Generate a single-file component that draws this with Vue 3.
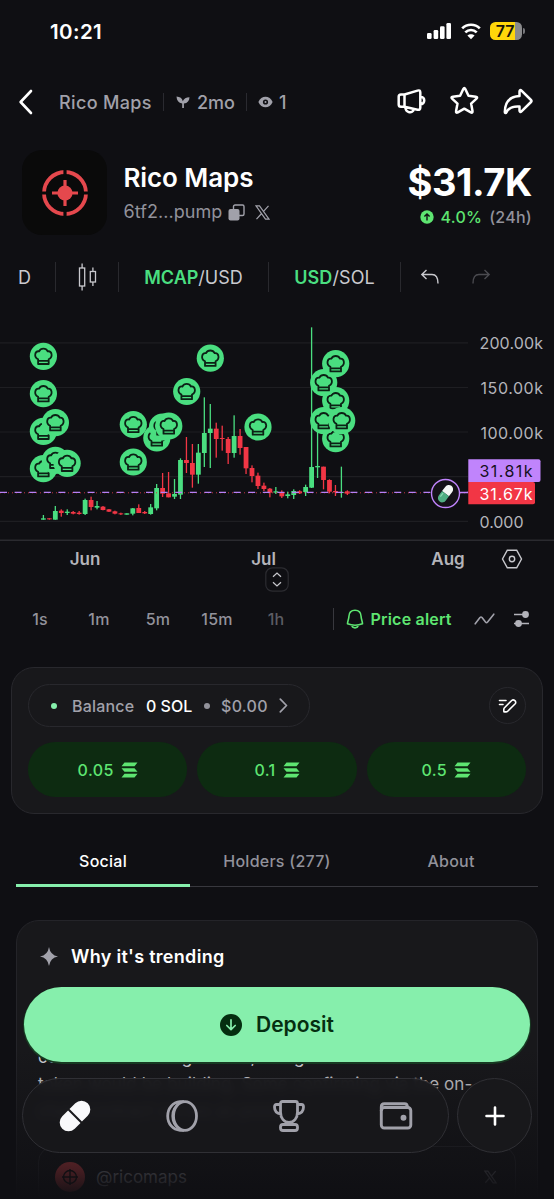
<template>
  <div class="app">
    <div class="status-bar">
      <span class="clock">10:21</span>
      <div class="status-icons">
        <svg width="26" height="18" viewBox="0 0 26 18" fill="#fff">
          <rect x="0" y="11" width="4.6" height="6" rx="1.3" />
          <rect x="6.6" y="8" width="4.6" height="9" rx="1.3" />
          <rect x="13" y="4.3" width="4.6" height="12.7" rx="1.3" />
          <rect x="19.4" y="1" width="4.6" height="16" rx="1.3" />
        </svg>
        <svg class="wifi" width="20" height="17" viewBox="0 0 20 17">
          <path d="M1.2 5.4C6 .5 14 .5 18.8 5.4M4.3 9.400c3.2-3.2 8.200-3.200 11.400 0" fill="none" stroke="#fff" stroke-width="2.700" />
          <path d="M10 16.200l-3.600-3.600c2-1.900 5.200-1.900 7.200 0z" fill="#fff" />
        </svg>
        <div class="battery"><span>77</span></div>
        <i class="battery-tip"></i>
      </div>
    </div>

    <header class="header">
      <svg class="back" width="16" height="28" viewBox="0 0 16 28" fill="none" stroke="#fff" stroke-width="2.600" stroke-linecap="round" stroke-linejoin="round">
        <path d="M13 3 2.600 14 13 25" />
      </svg>
      <span class="crumb crumb-name">Rico Maps</span>
      <i class="sep"></i>
      <span class="crumb crumb-age">
        <svg width="14" height="14" viewBox="0 0 14 14" fill="#a1a1aa">
          <path d="M.5 1.500c3.600.1 5.700 2 6.300 4.700C8 3.700 10 2.300 13.500 2.200c-.1 3.700-2 5.800-5.600 6.300V13H6.200V8.500C2.500 7.900.7 5.600.5 1.500z" />
        </svg>
        2mo
      </span>
      <i class="sep"></i>
      <span class="crumb crumb-views">
        <svg width="15" height="12" viewBox="0 0 15 12">
          <path d="M.4 6C3-1 12-1 14.600 6 12 13 3 13 .4 6z" fill="#a1a1aa" />
          <circle cx="7.500" cy="6" r="2.600" fill="#0f0f13" />
          <circle cx="7.500" cy="6" r="1" fill="#a1a1aa" />
        </svg>
        1
      </span>
      <div class="header-actions">
        <svg width="30" height="30" viewBox="0 0 30 30" fill="none" stroke="#fff" stroke-width="2.500" stroke-linejoin="round" stroke-linecap="round">
          <path d="M8.500 8.500 21.500 4.600Q24.300 3.700 24.300 6.500V21.500Q24.300 24.300 21.500 23.700L8.500 20.800zM8.500 8.500H5Q2.700 8.500 2.700 10.800V18.500Q2.700 20.800 5 20.800H8.500M24.500 10.800c5 0 5 7.400 0 7.400M9.300 21c.2 6 7.500 7 8.500 2.300" />
        </svg>
        <svg width="30" height="30" viewBox="0 0 30 30" fill="none" stroke="#fff" stroke-width="2.500" stroke-linejoin="round">
          <path d="M14.300 3c.7-1.300 1.300-1.300 2 0l3.200 6.800 7.300.9c1.500.2 1.700 1 .7 1.900l-5.400 5 1.400 7.500c.3 1.500-.4 2-1.700 1.300L15.300 22.700l-6.500 3.700c-1.300.7-2 .2-1.700-1.300l1.400-7.500-5.400-5c-1-.9-.8-1.700.7-1.900l7.300-.9z" />
        </svg>
        <svg width="32" height="30" viewBox="0 0 32 30" fill="none" stroke="#fff" stroke-width="2.500" stroke-linejoin="round">
          <path d="M17.500 10V5.500c0-1.500 1-1.900 2-.9l9.500 9.400c.7.700.7 1.300 0 2l-9.500 9.400c-1 1-2 .6-2-.9V20.500C10 20 6.500 22 4.500 26.200c-.6 1.300-1.700 1-1.700-.3C3 16 8 10.500 17.500 10z" />
        </svg>
      </div>
    </header>

    <section class="token">
      <div class="token-logo">
        <svg width="46" height="48" viewBox="-23 -24 46 48">
          <circle r="21" fill="none" stroke="#e5484d" stroke-width="3.800" />
          <path d="M0-24V24M-23 0H23" stroke="#0a0a0a" stroke-width="3.200" />
          <path d="M0-13V13M-13 0H13" stroke="#e5484d" stroke-width="3.200" />
          <circle r="7.600" fill="#e5484d" />
        </svg>
      </div>
      <div class="token-info">
        <h1>Rico Maps</h1>
        <div class="address">
          <span>6tf2...pump</span>
          <svg width="17" height="17" viewBox="0 0 17 17">
            <rect x="5.500" y="1" width="10.500" height="10.500" rx="1.500" fill="none" stroke="#a1a1aa" stroke-width="1.400" />
            <rect x=".5" y="5" width="11" height="11.500" rx="2" fill="#a1a1aa" />
          </svg>
          <svg class="x-logo" width="15" height="15" viewBox="0 0 15 15" fill="none" stroke="#a1a1aa" stroke-width="1.200">
            <path d="M1 .8H4.500L14 14.200H10.500zM13.500.8 8.300 6.700M6.600 8.500 1.500 14.200" />
          </svg>
        </div>
      </div>
      <div class="token-price">
        <div class="price">$31.7K</div>
        <div class="change">
          <svg width="14" height="14" viewBox="0 0 14 14">
            <circle cx="7" cy="7" r="6.700" fill="#5ee571" />
            <path d="M7 10.500V4M4.400 6.500 7 3.900l2.600 2.600" fill="none" stroke="#0f0f13" stroke-width="1.400" />
          </svg>
          <span class="up">4.0%</span>
          <span>(24h)</span>
        </div>
      </div>
    </section>

    <nav class="toolbar">
      <span class="tool tool-day">D</span>
      <span class="tool tool-candle">
        <svg width="19" height="28" viewBox="0 0 19 28" fill="none" stroke="#c9c9ce" stroke-width="1.300">
          <rect x="1.500" y="5" width="5.200" height="18" />
          <rect x="12.300" y="8.500" width="5.200" height="10.500" />
          <path d="M4.100 .5V5M4.100 23V27.500M14.900 4.500V8.500M14.900 19V23" />
        </svg>
      </span>
      <span class="tool tool-mcap"><b>MCAP</b>/USD</span>
      <span class="tool tool-usd"><b>USD</b>/SOL</span>
      <span class="tool tool-history">
        <svg width="20" height="16" viewBox="0 0 20 16" fill="none" stroke="#c9c9ce" stroke-width="1.400">
          <path d="M6.500 1 1.800 5.500 6.500 10M2 5.500H12C16 5.500 18 8 18 14.500" />
        </svg>
        <svg width="20" height="16" viewBox="0 0 20 16" fill="none" stroke="#4b4b50" stroke-width="1.400">
          <path d="M13.500 1 18.200 5.500 13.500 10M18 5.500H8C4 5.500 2 8 2 14.500" />
        </svg>
      </span>
    </nav>

    <svg class="chart" width="554" height="241" viewBox="0 300 554 241">
      <path d="M0 342.800H468M0 387.500H468M0 432H468M0 476.700H468M0 521.300H468" stroke="#1e1e22" stroke-width="1.200" />
      <path d="M0 540.200H554" stroke="#2a2a2f" stroke-width="1.600" />
      <g v-for="(c, i) in candles" :key="i" :fill="c.up ? '#4ade80' : '#f23645'">
        <rect :x="c.x - 0.65" :y="c.high" width="1.300" :height="c.low - c.high" />
        <rect :x="c.x - 2.4" :y="c.open" width="4.800" :height="c.close - c.open" />
      </g>
      <path d="M0 492.800H468" stroke="#c4313f" stroke-width="1" stroke-dasharray="1 3" />
      <path d="M0 492.300H468" stroke="#b780f5" stroke-width="1.300" stroke-dasharray="7 7.600" />
      <g v-for="(m, i) in markers" :key="'m' + i" :transform="`translate(${m[0]} ${m[1]})`">
        <circle r="13.600" fill="#4ade80" />
        <path d="M-5.300 3C-10 .5-8.500-5.600-4.300-5-2.600-8.600 2.600-8.600 4.300-5 8.500-5.600 10 .5 5.300 3V7.700H-5.300zM-5.300 4.600H5.300" fill="none" stroke="#0c2115" stroke-width="1.800" stroke-linejoin="round" />
      </g>
      <path d="M460 492.500H468" stroke="#c084fc" stroke-width="1.500" />
      <circle cx="445.500" cy="493.500" r="14" fill="#141218" stroke="#c084fc" stroke-width="1.400" />
      <g transform="translate(445.500 493.700) rotate(37)">
        <path d="M-4.300 0V-5.500a4.300 4.300 0 0 1 8.600 0V0z" fill="#f4f7f5" />
        <path d="M-4.300 0V5.500a4.300 4.300 0 0 0 8.600 0V0z" fill="#4fae83" />
        <path d="M-2.300 1V5.500" stroke="#8bd8b2" stroke-width="1.200" />
      </g>
      <path d="M468.300 459.300H538.500q2 0 2 2V480q0 2-2 2H468.300z" fill="#c084fc" />
      <path d="M468.300 482H533q2 0 2 2V502.300q0 2-2 2H468.300z" fill="#f23645" />
      <g class="axis">
        <text x="479.500" y="349.300" textLength="63.500">200.00k</text>
        <text x="480.500" y="394" textLength="62.500">150.00k</text>
        <text x="480.500" y="438.700" textLength="62.500">100.00k</text>
        <text x="479.500" y="477" textLength="53" class="tag-dark">31.81k</text>
        <text x="479.500" y="499.700" textLength="53" class="tag-light">31.67k</text>
        <text x="479.500" y="527.700" textLength="44">0.000</text>
      </g>
    </svg>

    <div class="months">
      <span>Jun</span>
      <span>Jul</span>
      <span>Aug</span>
      <svg width="22" height="20" viewBox="0 0 22 20" fill="none" stroke="#c9c9ce" stroke-width="1.400">
        <path d="M6.300 1.200H15.700L20.500 10 15.700 18.800H6.300L1.500 10z" />
        <circle cx="11" cy="10" r="2.700" />
      </svg>
    </div>
    <div class="resize">
      <svg width="24" height="25" viewBox="0 0 24 25" fill="none">
        <rect x=".8" y=".8" width="22.400" height="23.400" rx="6.500" fill="#0f0f13" stroke="#2c2c31" stroke-width="1.200" />
        <path d="M8 9.800 12 6l4 3.800M8 15.200l4 3.800 4-3.800" stroke="#c9c9ce" stroke-width="1.200" />
      </svg>
    </div>

    <div class="intervals">
      <span v-for="t in intervals" :key="t">{{ t }}</span>
      <i class="interval-sep"></i>
      <svg width="18" height="20" viewBox="0 0 18 20" fill="none" stroke="#5ee571" stroke-width="1.600" stroke-linejoin="round">
        <path d="M9 1.200C5 1.200 3 4 2.900 7.500 2.800 10.500 1.500 12 1.500 14.800Q5 16.200 9 16.200t7.500-1.400c0-2.800-1.300-4.300-1.400-7.300C15 4 13 1.200 9 1.200zM5.800 16.200c.5 3.500 5.900 3.500 6.400 0" />
      </svg>
      <span class="price-alert">Price alert</span>
      <svg class="wave" width="21" height="14" viewBox="0 0 21 14" fill="none" stroke="#a1a1aa" stroke-width="1.600" stroke-linecap="round" stroke-linejoin="round">
        <path d="M1.200 11.800 6 5.500Q7 4.500 8 5.500L11.500 10Q12.500 11.200 13.600 10L19.800 2.200" />
      </svg>
      <svg class="sliders" width="17" height="18" viewBox="0 0 17 18" fill="#b3b3ba">
        <path d="M1 4.500H12M1 13.500H16" stroke="#b3b3ba" stroke-width="1.500" />
        <circle cx="12.500" cy="4.500" r="3.400" />
        <circle cx="5.500" cy="13.500" r="3.400" />
      </svg>
    </div>

    <section class="trade">
      <div class="trade-top">
        <div class="balance">
          <i class="dot green"></i>
          <span class="balance-label">Balance</span>
          <span class="balance-sol">0 SOL</span>
          <i class="dot grey"></i>
          <span class="balance-usd">$0.00</span>
          <svg width="9" height="15" viewBox="0 0 9 15" fill="none" stroke="#a1a1aa" stroke-width="1.700" stroke-linecap="round" stroke-linejoin="round">
            <path d="M1.300 1.200 7.500 7.500 1.300 13.800" />
          </svg>
        </div>
        <button class="edit">
          <svg width="20" height="16" viewBox="0 0 20 16" fill="none" stroke="#fff" stroke-width="1.600" stroke-linecap="round" stroke-linejoin="round">
            <path d="M1.500 2.500H8M1.500 6.500H5M6.500 9.700 13.700 2.500C15.700.8 19 3.700 17.200 5.700L9.700 13.200Q9 13.900 8 13.900H6.500Q5.800 13.900 5.800 13.200V11.500Q5.800 10.500 6.500 9.700z" />
          </svg>
        </button>
      </div>
      <div class="amounts">
        <button v-for="a in amounts" :key="a">
          {{ a }}
          <svg width="17" height="16" viewBox="0 0 17 16" fill="#5ee571">
            <path d="M3.500.5H16.500L13.500 4.200H.5zM.5 6.200H13.500L16.500 9.800H3.500zM3.500 11.800H16.500L13.500 15.500H.5z" />
          </svg>
        </button>
      </div>
    </section>

    <div class="tabs">
      <span class="tab active">Social</span>
      <span class="tab">Holders (277)</span>
      <span class="tab">About</span>
    </div>

    <section class="trending">
      <h2>
        <svg width="18" height="19" viewBox="0 0 18 19" fill="#a1a1aa">
          <path d="M9 0Q10.300 8.200 18 9.500 10.300 10.800 9 19 7.700 10.800 0 9.500 7.700 8.200 9 0z" />
        </svg>
        Why it's trending
      </h2>
      <p>
        <span>contributors selling tokens, along</span>
        <span class="wide">token would be building. Some confirming via the on-</span>
        <span>chain contract serves as proof</span>
      </p>
      <div class="post">
        <div class="avatar">
          <svg width="18" height="18" viewBox="0 0 18 18" fill="none" stroke="#160f12" stroke-width="1.400">
            <circle cx="9" cy="9" r="6.500" />
            <path d="M9 1V17M1 9H17" />
          </svg>
        </div>
        <span>@ricomaps</span>
        <svg class="post-x" width="13" height="14" viewBox="0 0 15 15" fill="none" stroke="#a1a1aa" stroke-width="1.500">
          <path d="M1 .8H4.500L14 14.200H10.500zM13.500.8 8.300 6.700M6.600 8.500 1.500 14.200" />
        </svg>
      </div>
    </section>

    <div class="fade"></div>

    <div class="dock">
      <button class="deposit">
        <svg width="22" height="22" viewBox="0 0 22 22">
          <circle cx="11" cy="11" r="11" fill="#052e10" />
          <path d="M11 5.800V15.500M6.800 11.500 11 15.700l4.200-4.200" fill="none" stroke="#86efac" stroke-width="1.700" stroke-linecap="round" stroke-linejoin="round" />
        </svg>
        Deposit
      </button>
      <div class="dock-row">
        <nav class="dock-nav">
          <svg width="34" height="34" viewBox="-17 -17 34 34">
            <g transform="rotate(45)" fill="#f8f8fa">
              <path d="M-8.800-1V-9.200a8.800 8.800 0 0 1 17.600 0V-1z" />
              <path d="M-8.800 1V9.200a8.800 8.800 0 0 0 17.600 0V1z" />
            </g>
          </svg>
          <svg width="34" height="34" viewBox="0 0 34 34" fill="none" stroke="#a1a1aa" stroke-width="2.800">
            <ellipse cx="20" cy="17" rx="11.500" ry="14.300" />
            <path d="M19 2.700H15C8 3.300 2.700 9 2.700 17S8 30.700 15 31.300h4" />
            <path d="M13.500 4.700C5.200 10 5.200 24 13.500 29.300" stroke-width="1.800" />
          </svg>
          <svg width="34" height="34" viewBox="0 0 34 34" fill="none" stroke="#a1a1aa" stroke-width="2.800" stroke-linejoin="round">
            <path d="M10.500 2.500H23.500Q25.500 2.500 25.500 4.500V13C25.500 19 22 23.500 17 23.500S8.500 19 8.500 13V4.500Q8.500 2.500 10.500 2.500zM8.500 5.500H4.500Q2.500 5.500 2.500 8C2.500 12 5 14.500 9 15M25.500 5.500H29.500Q31.500 5.500 31.500 8C31.500 12 29 14.500 25 15M17 23.500V25" />
            <rect x="8.500" y="25.500" width="17" height="6" rx="2.500" />
          </svg>
          <svg width="34" height="34" viewBox="0 0 34 34" fill="none" stroke="#a1a1aa" stroke-width="2.900" stroke-linejoin="round">
            <rect x="2.300" y="8.500" width="29.500" height="20.500" rx="3" />
            <path d="M2.300 12V8Q2.300 4.800 5.300 4.800H25.500Q28.500 4.800 28.500 8.500" />
            <circle cx="24.500" cy="18.700" r="1.500" />
          </svg>
        </nav>
        <button class="plus">
          <svg width="20" height="20" viewBox="0 0 20 20" stroke="#fff" stroke-width="2.600" stroke-linecap="round">
            <path d="M10 1.500V18.500M1.500 10H18.500" />
          </svg>
        </button>
      </div>
    </div>
  </div>
</template>

<script setup>
const intervals = ['1s', '1m', '5m', '15m', '1h']
const amounts = ['0.05', '0.1', '0.5']

// high, low, body top, body bottom (thirds of a pixel from the chart top), 1 = up
const raw = [
  [615, 629, 625, 629, 1], [625, 629, 625, 628, 0], [588, 629, 603, 629, 1],
  [598, 620, 602, 609, 0], [598, 615, 605, 609, 1], [603, 613, 606, 611, 0],
  [603, 614, 608, 612, 0], [566, 615, 570, 612, 1], [560, 601, 570, 591, 0],
  [573, 598, 588, 593, 1], [588, 601, 590, 600, 0], [597, 606, 598, 605, 0],
  [602, 613, 604, 611, 0], [608, 615, 610, 613, 0], [610, 614, 610, 614, 1],
  [594, 616, 595, 611, 1], [583, 609, 594, 609, 0], [603, 612, 606, 610, 0],
  [582, 614, 592, 612, 1], [522, 601, 534, 595, 1], [489, 561, 534, 551, 0],
  [486, 562, 550, 562, 0], [507, 567, 552, 560, 1], [445, 567, 450, 554, 1],
  [381, 489, 450, 459, 0], [402, 533, 459, 494, 0], [402, 521, 428, 494, 1],
  [262, 471, 369, 429, 1], [282, 474, 356, 369, 1], [338, 443, 356, 387, 0],
  [347, 422, 384, 387, 0], [381, 462, 387, 429, 0], [316, 443, 378, 429, 1],
  [357, 434, 378, 414, 0], [411, 492, 411, 475, 0], [466, 517, 474, 498, 0],
  [488, 537, 497, 528, 0], [518, 543, 527, 537, 0], [534, 562, 536, 548, 0],
  [531, 552, 544, 548, 1], [541, 564, 546, 559, 0], [545, 565, 553, 558, 1],
  [538, 567, 543, 555, 1], [541, 552, 544, 550, 0], [524, 558, 531, 546, 1],
  [52, 534, 471, 533, 1], [360, 504, 468, 472, 1], [470, 538, 470, 510, 0],
  [508, 550, 510, 545, 0], [525, 558, 543, 547, 0], [470, 563, 546, 549, 1],
  [541, 555, 544, 551, 0]
]

const y = (v) => 310 + v / 3

const candles = raw.map(([high, low, open, close, up], i) => ({
  x: 43.4 + i * 5.96,
  high: y(high),
  low: y(low),
  open: y(open),
  close: y(close),
  up
}))

// later markers are drawn over the earlier ones
const markers = [
  [43.4, 356.3], [43.4, 393.7], [43.4, 431.3], [55.4, 422.7],
  [43.4, 468.7], [55.4, 460.3], [67.1, 463.3],
  [133.3, 424.5], [133.3, 462], [156.8, 438], [162.5, 427], [168.8, 426],
  [186.7, 391.5], [210.3, 358.2], [258, 427],
  [335.7, 438.7], [335.7, 400.7], [323.7, 420.7], [341.7, 420.7],
  [323.7, 382.7], [335.7, 363.7]
]
</script>

<style>
body {
  background: #0f0f13;
}
</style>

<style scoped>
.app {
  position: relative;
  display: flex;
  flex-direction: column;
  width: 554px;
  height: 1199px;
  overflow: hidden;
  background: #0f0f13;
  color: #fff;
  font-family: Inter, 'Liberation Sans', sans-serif;
  white-space: nowrap;
}

.app > * {
  flex-shrink: 0;
}

svg {
  display: block;
  flex-shrink: 0;
}

button {
  display: flex;
  align-items: center;
  justify-content: center;
  padding: 0;
  border: 0;
  font-family: inherit;
}

/* status bar */
.status-bar {
  display: flex;
  justify-content: space-between;
  align-items: center;
  height: 62px;
  padding: 0 29px 0 50px;
}

.clock {
  font-size: 20.5px;
  font-weight: 600;
  letter-spacing: 0.4px;
}

.status-icons {
  display: flex;
  align-items: center;
}

.wifi {
  margin: 0 9px 0 8px;
}

.battery {
  width: 32px;
  height: 18px;
  border-radius: 5.5px;
  background: linear-gradient(90deg, #ffd60a 77%, #8a8a8c 77%);
  color: #16130a;
  font-size: 16px;
  font-weight: 600;
  line-height: 18px;
  text-align: center;
}

.battery span {
  margin-left: -2px;
}

.battery-tip {
  width: 2px;
  height: 6px;
  margin-left: 1px;
  border-radius: 0 2px 2px 0;
  background: #77777b;
}

/* header */
.header {
  display: flex;
  align-items: center;
  height: 80px;
  padding: 0 20px 0 18px;
}

.back {
  margin-right: 25px;
}

.crumb {
  display: flex;
  align-items: center;
  gap: 7px;
  color: #a1a1aa;
  font-size: 18px;
  font-weight: 500;
}

.crumb-name {
  width: 104px;
  letter-spacing: 0.35px;
}

.sep {
  width: 1px;
  height: 18px;
  background: #2a2a30;
}

.crumb-age {
  width: 70px;
  padding-left: 12px;
}

.crumb-views {
  padding-left: 11px;
  gap: 6px;
}

.header-actions {
  display: flex;
  gap: 23px;
  margin-left: auto;
  padding-bottom: 2px;
}

/* token */
.token {
  display: flex;
  height: 112px;
  padding: 8px 22px 0 22px;
  box-sizing: border-box;
}

.token-logo {
  display: flex;
  align-items: center;
  justify-content: center;
  width: 85px;
  height: 85px;
  border-radius: 20px;
  background: #0a0a0a;
}

.token-info {
  margin-left: 16.5px;
}

.token-info h1 {
  margin: 12px 0 0;
  font-size: 26px;
  font-weight: 600;
  line-height: 32px;
  letter-spacing: -0.1px;
}

.address {
  display: flex;
  align-items: center;
  margin-top: 6px;
  color: #92929b;
  font-size: 18px;
  line-height: 24px;
}

.address span {
  width: 104px;
  letter-spacing: 0.05px;
}

.x-logo {
  margin-left: 10px;
}

.token-price {
  margin-left: auto;
  text-align: right;
}

.price {
  margin-top: 9px;
  font-size: 38px;
  font-weight: 700;
  line-height: 46px;
  letter-spacing: -0.4px;
}

.change {
  display: flex;
  align-items: center;
  justify-content: flex-end;
  gap: 7px;
  color: #92929b;
  font-size: 16px;
  font-weight: 500;
  line-height: 24px;
  letter-spacing: 0.25px;
}

.up {
  color: #5ee571;
}

/* chart toolbar */
.toolbar {
  display: flex;
  align-items: center;
  height: 46px;
}

.tool {
  display: flex;
  align-items: center;
  justify-content: center;
  box-sizing: border-box;
  height: 30px;
  border-right: 1px solid #29292e;
  color: #c9c9ce;
  font-size: 18px;
}

.tool b {
  color: #4ade80;
  font-weight: 600;
}

.tool-day {
  width: 56px;
  padding-right: 6px;
}

.tool-candle {
  width: 63px;
  padding-left: 1px;
}

.tool-mcap {
  width: 150px;
}

.tool-usd {
  width: 132px;
  letter-spacing: 0.1px;
}

.tool-history {
  gap: 31px;
  padding-left: 19px;
  border: 0;
}

.axis text {
  fill: #b4b4ba;
  font-size: 16px;
}

.axis .tag-dark {
  fill: #16101c;
}

.axis .tag-light {
  fill: #fff;
}

.months {
  display: grid;
  grid-template-columns: 170px 187px 182px;
  position: relative;
  height: 36px;
  align-items: center;
  color: #b4b4ba;
  font-size: 17px;
  font-weight: 600;
  text-align: center;
}

.months svg {
  position: absolute;
  left: 500.5px;
  top: 8px;
}

.resize {
  display: flex;
  justify-content: center;
  height: 25px;
  margin-top: -10px;
}

.intervals {
  display: flex;
  align-items: center;
  height: 36px;
  margin-top: 9px;
  padding-left: 10.5px;
  color: #92929b;
  font-size: 16px;
  font-weight: 500;
}

.intervals span {
  width: 59px;
  text-align: center;
  letter-spacing: 0.2px;
}

.intervals span:nth-child(5) {
  color: #5c5c63;
}

.interval-sep {
  width: 1px;
  height: 22px;
  margin: 0 12px 0 27px;
  background: #38383e;
}

.intervals .price-alert {
  width: 94px;
  margin-left: 7px;
  text-align: left;
  color: #5ee571;
  font-weight: 600;
}

.wave {
  margin-left: 9px;
}

.sliders {
  margin-left: 18px;
}

/* quick buy card */
.trade {
  box-sizing: border-box;
  height: 147px;
  margin: 30px 11px 0;
  padding: 16px 16px 0;
  border: 1px solid #28282d;
  border-radius: 23px;
  background: #18181b;
}

.trade-top {
  display: flex;
  align-items: center;
  justify-content: space-between;
}

.balance {
  display: flex;
  align-items: center;
  box-sizing: border-box;
  width: 282px;
  height: 43px;
  padding-left: 22px;
  border: 1px solid #28282d;
  border-radius: 22px;
  color: #a1a1aa;
  font-size: 16px;
  font-weight: 500;
}

.dot {
  width: 6px;
  height: 6px;
  border-radius: 50%;
}

.green {
  background: #86efac;
}

.grey {
  background: #92929b;
}

.balance-label {
  width: 74px;
  margin-left: 15px;
  letter-spacing: 0.2px;
}

.balance-sol {
  width: 58px;
  color: #fff;
}

.balance-usd {
  width: 58px;
  margin-left: 11px;
  letter-spacing: 0.3px;
}

.edit {
  width: 37px;
  height: 37px;
  border: 1px solid #28282d;
  border-radius: 50%;
  background: transparent;
}

.amounts {
  display: grid;
  grid-template-columns: repeat(3, 1fr);
  gap: 10px;
  margin-top: 15px;
}

.amounts button {
  gap: 7px;
  height: 55px;
  border-radius: 28px;
  background: #0d2b11;
  color: #5ee571;
  font-size: 16px;
  font-weight: 500;
  letter-spacing: 0.4px;
}

/* tabs */
.tabs {
  display: grid;
  grid-template-columns: 1fr 1fr 1fr;
  height: 51px;
  margin: 21px 16px 0;
  border-bottom: 1px solid #38383e;
}

.tab {
  padding-top: 16px;
  color: #92929b;
  font-size: 16px;
  font-weight: 500;
  line-height: 20px;
  letter-spacing: 0.25px;
  text-align: center;
}

.tab.active {
  border-bottom: 3px solid #86efac;
  color: #fff;
  box-sizing: border-box;
  height: 52px;
}

/* trending */
.trending {
  box-sizing: border-box;
  height: 300px;
  margin: 33px 16px 0;
  padding: 0 21px;
  border: 1px solid #242429;
  border-radius: 23px;
  background: #18181b;
}

.trending h2 {
  display: flex;
  align-items: center;
  gap: 13px;
  height: 70px;
  margin: 0 0 0 2px;
  font-size: 18px;
  font-weight: 600;
  letter-spacing: 0.3px;
}

.trending p {
  display: flex;
  flex-direction: column;
  margin: 53px 0 0;
  color: #d4d4d8;
  font-size: 17px;
  line-height: 27px;
}

.trending .wide {
  letter-spacing: 0.1px;
}

.post {
  display: flex;
  align-items: center;
  height: 60px;
  margin-top: 21px;
  padding: 0 18px 0 16px;
  border: 1px solid #2c2c31;
  border-radius: 16px;
  color: #a1a1aa;
  font-size: 17px;
}

.avatar {
  display: flex;
  align-items: center;
  justify-content: center;
  width: 30px;
  height: 30px;
  margin-right: 11px;
  border-radius: 50%;
  background: #e5484d;
}

.post-x {
  margin-left: auto;
  opacity: 0.6;
}

.fade {
  position: absolute;
  left: 0;
  right: 0;
  bottom: 0;
  height: 150px;
  background: linear-gradient(180deg, rgba(15, 15, 19, 0), rgba(15, 15, 19, 0.74) 80%, #0f0f13);
}

/* floating dock */
.dock {
  position: absolute;
  left: 22px;
  right: 22px;
  bottom: 46px;
}

.deposit {
  gap: 14px;
  width: 506px;
  height: 75px;
  margin: 0 auto 16px 2px;
  border-radius: 38px;
  background: #86efac;
  box-shadow: 0 1px 0 1px #173a22;
  color: #052e10;
  font-size: 21px;
  font-weight: 600;
}

.dock-row {
  display: flex;
  gap: 8px;
}

.dock-nav {
  display: flex;
  align-items: center;
  justify-content: space-between;
  box-sizing: border-box;
  width: 427px;
  height: 75px;
  padding: 0 35px;
  border: 1px solid #303035;
  border-radius: 38px;
  background: rgba(24, 24, 27, 0.93);
  backdrop-filter: blur(4px);
}

.plus {
  box-sizing: border-box;
  width: 75px;
  height: 75px;
  border: 1px solid #303035;
  border-radius: 50%;
  background: rgb(24, 24, 27);
}
</style>
